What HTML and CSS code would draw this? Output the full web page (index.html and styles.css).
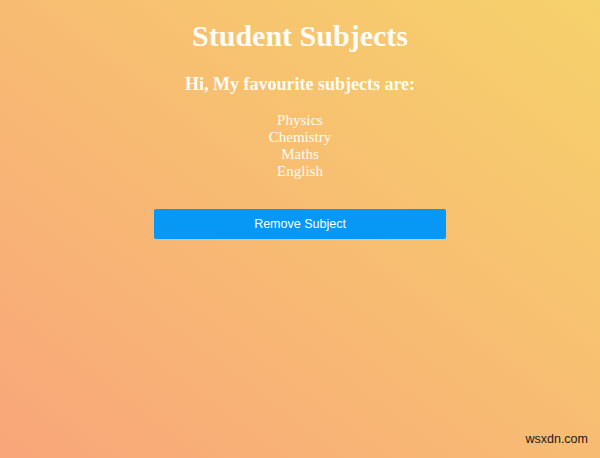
FILE: index.html
```html
<!DOCTYPE html>
<html>
<head>
<meta charset="utf-8">
<link rel="stylesheet" href="styles.css">
</head>
<body>
<div class="page">
  <h1 class="title">Student Subjects</h1>
  <h3 class="subtitle">Hi, My favourite subjects are:</h3>
  <ul class="subjects">
    <li>Physics</li>
    <li>Chemistry</li>
    <li>Maths</li>
    <li>English</li>
  </ul>
  <button class="remove">Remove Subject</button>
</div>
<div class="watermark">wsxdn.com</div>
</body>
</html>
```
FILE: styles.css
```css
html, body {
  margin: 0;
  height: 100%;
}
body {
  background: linear-gradient(to top right, #f9a67a 0%, #f6d26b 100%);
  font-family: "Liberation Serif", "Times New Roman", serif;
  color: #fffdf5;
  position: relative;
  overflow: hidden;
}
.page {
  display: flex;
  flex-direction: column;
  align-items: center;
  padding-top: 19px;
}
.title {
  font-size: 30px;
  line-height: 34px;
  margin: 0;
  font-weight: bold;
}
.subtitle {
  font-size: 18px;
  line-height: 20px;
  margin: 21px 0 0;
  font-weight: bold;
}
.subjects {
  list-style: none;
  margin: 18px 0 0;
  padding: 0;
  text-align: center;
  font-size: 15px;
  line-height: 17px;
}
.remove {
  margin-top: 29px;
  width: 292px;
  height: 30px;
  border: none;
  border-radius: 2px;
  background: #0797f5;
  color: #fff;
  font-family: "Liberation Sans", Arial, sans-serif;
  font-size: 12.5px;
}
.watermark {
  position: absolute;
  right: 12px;
  bottom: 12px;
  font-family: "Liberation Sans", Arial, sans-serif;
  font-size: 12.5px;
  color: #1a1a1a;
}
```
